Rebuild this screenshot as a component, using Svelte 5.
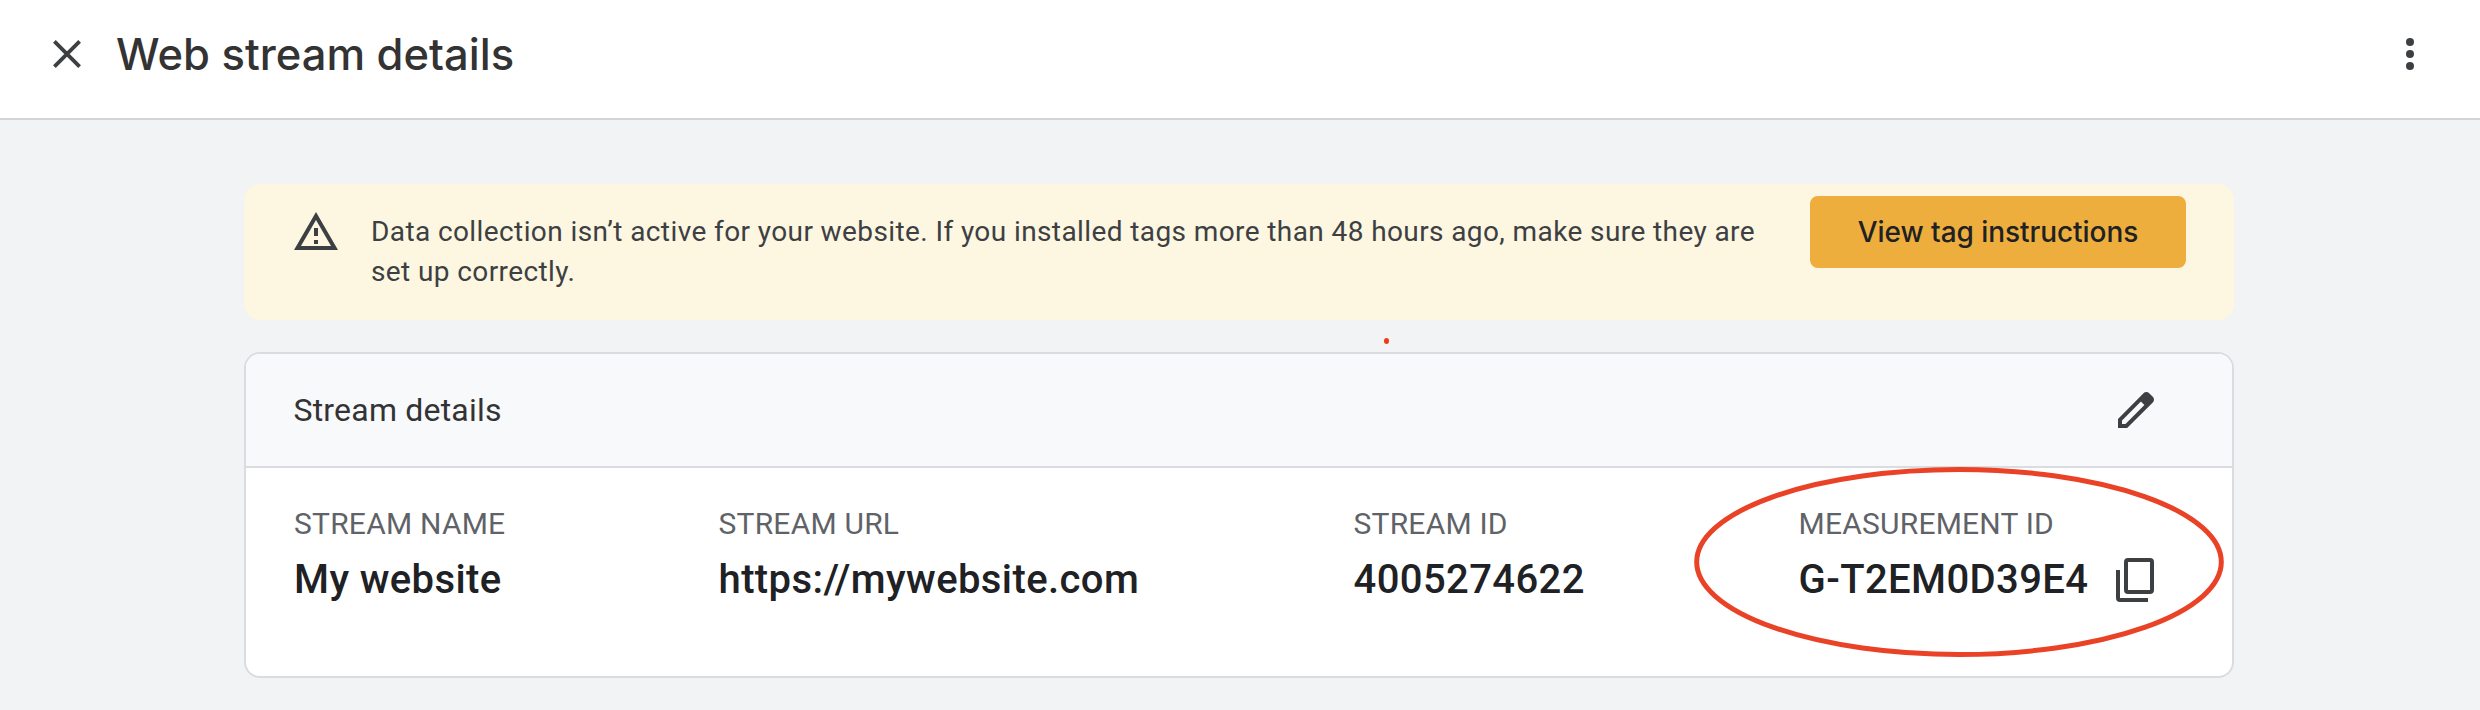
<script>
  const fields = [
    { label: 'STREAM NAME', value: 'My website' },
    { label: 'STREAM URL', value: 'https://mywebsite.com' },
    { label: 'STREAM ID', value: '4005274622' },
    { label: 'MEASUREMENT ID', value: 'G-T2EM0D39E4', marked: true }
  ];
</script>

<div class="page">
  <header class="topbar">
    <button class="icon" aria-label="Close">
      <svg width="28" height="28" viewBox="0 0 28 28"><path d="M1.4 1.4 26.6 26.6M26.6 1.4 1.4 26.6" fill="none" stroke="#3c4043" stroke-width="3.8" /></svg>
    </button>
    <h1>Web stream details</h1>
    <button class="icon more" aria-label="More options">
      <svg width="8" height="32" viewBox="0 0 8 32" fill="#3c4043"><circle cx="4" cy="4" r="4" /><circle cx="4" cy="16" r="4" /><circle cx="4" cy="28" r="4" /></svg>
    </button>
  </header>

  <main>
    <section class="banner">
      <svg class="warn" width="48" height="48" viewBox="0 0 24 24" fill="#3c4043"><path d="M12 5.99 19.53 19H4.47L12 5.99M12 2 1 21h22L12 2zm1 14h-2v2h2v-2zm0-6h-2v4h2v-4z" /></svg>
      <p>Data collection isn’t active for your website. If you installed tags more than 48 hours ago, make sure they are<br />set up correctly.</p>
      <button class="action">View tag instructions</button>
    </section>
    <i class="speck"></i>

    <section class="card">
      <div class="card-head">
        <h2>Stream details</h2>
        <button class="icon" aria-label="Edit">
          <svg width="36" height="36" viewBox="0 0 36 36"><path fill="#3c4043" fill-rule="evenodd" d="M34.8 4.8 31.2 1.2a4 4 0 0 0-5.7 0L0 26.9V36h9.1L34.8 10.5a4 4 0 0 0 0-5.7zM7.5 32H4v-3.5L22.9 9.6l3.5 3.5L7.5 32z" /></svg>
        </button>
      </div>
      <div class="fields">
        {#each fields as f}
          <div class="field">
            <span class="label">{f.label}</span>
            <span class="value">{f.value}</span>
            {#if f.marked}
              <button class="icon copy" aria-label="Copy">
                <svg width="38" height="44" viewBox="0 0 38 44" fill="none" stroke="#3c4043" stroke-width="4"><rect x="10" y="2" width="26" height="32" rx="2" /><path d="M2 12v28a2 2 0 0 0 2 2h28" /></svg>
              </button>
              <svg class="ring" width="530" height="190" viewBox="0 0 530 190"><ellipse cx="265" cy="95" rx="262.3" ry="92.5" fill="none" stroke="#ea4226" stroke-width="5" /></svg>
            {/if}
          </div>
        {/each}
      </div>
    </section>
  </main>
</div>

<style>
  :global(body) { background: #f1f3f5; }
  .page { width: 2480px; height: 710px; overflow: hidden; background: #f1f3f5; font-family: Roboto, sans-serif; box-sizing: border-box; }
  h1, h2, p { margin: 0; font-weight: 400; }
  button { margin: 0; border: 0; padding: 0; background: none; font: inherit; }
  svg { display: block; }
  .icon { display: flex; }
  .topbar { display: flex; align-items: center; box-sizing: border-box; height: 120px; padding: 0 66px 10px 53px; background: #fff; border-bottom: 2px solid #d3d7d4; }
  h1 { margin-left: 35px; flex: 1; font: 500 43.5px/56px Inter, sans-serif; color: #333; }
  main { padding: 64px 246px 0 244px; display: flex; flex-direction: column; }
  .banner { display: flex; align-items: flex-start; box-sizing: border-box; height: 136px; padding: 12px 48px 0 48px; background: #fdf6e0; border-radius: 16px; }
  .warn { margin-top: 12px; }
  p { flex: 1; margin: 16px 0 0 31px; white-space: nowrap; font-size: 28px; line-height: 40px; letter-spacing: .4px; color: #3c4043; }
  .action { width: 376px; height: 72px; border-radius: 8px; background: #edae3d; font: 500 28px/70px Inter, sans-serif; letter-spacing: -.06px; color: #202124; }
  .speck { align-self: flex-start; width: 5px; height: 6px; margin: 18px 0 8px 1140px; border-radius: 50%; background: #f03a17; }
  .card { box-sizing: border-box; height: 326px; border: 2px solid #dadce0; border-radius: 16px; background: #fff; }
  .card-head { display: flex; align-items: center; justify-content: space-between; box-sizing: border-box; height: 114px; padding: 0 78px 0 47.5px; border-radius: 14px 14px 0 0; border-bottom: 2px solid #dadce0; background: #f8f9fb; }
  h2 { font-size: 32px; line-height: 40px; letter-spacing: .2px; color: #333; }
  .fields { display: grid; grid-template-columns: 424.5px 635px 445px 1fr; padding: 36px 0 0 48px; }
  .field { position: relative; display: flex; flex-direction: column; }
  .label { font-size: 30px; line-height: 40px; letter-spacing: .22px; color: #5f6368; }
  .value { margin-top: 12px; font-size: 40px; font-weight: 500; line-height: 48px; letter-spacing: .4px; color: #202124; white-space: nowrap; }
  .copy { position: absolute; left: 317.5px; top: 54px; }
  .ring { position: absolute; left: -104.5px; top: -37px; pointer-events: none; }
</style>
